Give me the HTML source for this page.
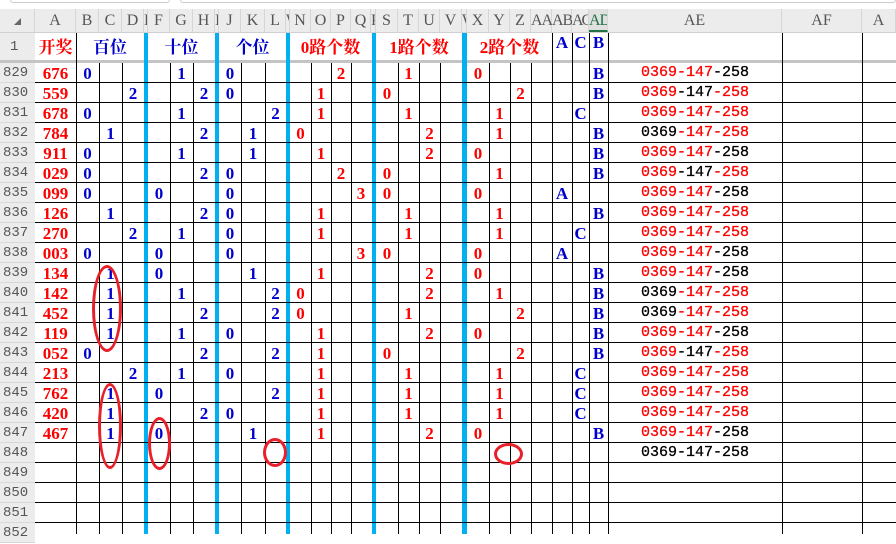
<!DOCTYPE html>
<html><head><meta charset="utf-8"><style>
*{margin:0;padding:0;box-sizing:border-box}
body{width:896px;height:534px;overflow:hidden;background:#fff;position:relative;font-family:"Liberation Serif","Noto Serif CJK SC",serif}
.a{position:absolute}
.ch{position:absolute;top:9px;height:23px;background:#ececec;color:#555;font:16px "Liberation Serif",serif;line-height:23px;text-align:center;border-right:1px solid #d6d6d6}
.vl{position:absolute;width:1px;background:#000}
.bl{position:absolute;background:#00b0f0;top:33px;height:501px}
.hl{position:absolute;left:35px;width:861px;height:1px;background:#000}
.rh{position:absolute;left:0;width:35px;height:20px;background:#ececec;color:#555;font:14px "Liberation Mono",monospace;line-height:21px;padding-left:3px;border-bottom:1px solid #d8d8d8}
.row{position:absolute;left:0;width:896px;height:20px}
.row span{position:absolute;top:1px;height:20px;line-height:20px;text-align:center;font:bold 17px "Liberation Serif",serif}
.r{color:#f00}.b{color:#0000cc}.k{color:#000}
.cA{left:35px;width:41px}.cB{left:76px;width:23px}.cC{left:99px;width:23px}.cD{left:122px;width:22px}
.cF{left:148px;width:22px}.cG{left:170px;width:23px}.cH{left:193px;width:22px}
.cJ{left:219px;width:22px}.cK{left:241px;width:24px}.cL{left:265px;width:21px}
.cN{left:290px;width:21px}.cO{left:311px;width:20px}.cP{left:331px;width:20px}.cQ{left:351px;width:20px}
.cS{left:376px;width:22px}.cT{left:398px;width:21px}.cU{left:419px;width:21px}.cV{left:440px;width:22px}
.cX{left:467px;width:22px}.cY{left:489px;width:21px}.cZ{left:510px;width:21px}
.cAB{left:552px;width:20px}.cAC{left:572px;width:17px}.cAD{left:589px;width:19px}
.row span.cAE{left:608px;width:174px;font:15px "Liberation Mono",monospace;color:#000;-webkit-text-stroke:0.3px}
.cAE i{font-style:normal;color:#f00}
.h1{position:absolute;top:33px;height:28px;line-height:28px;text-align:center;font:bold 17px "Liberation Serif","Noto Serif CJK SC",serif}
.ell{position:absolute;border:3px solid #e8202a;border-radius:50%}
</style></head><body>
<div class="a" style="left:10px;top:0;width:160px;height:3px;border:1px solid #ccc;border-top:none;border-radius:0 0 4px 4px"></div>
<div class="a" style="left:180px;top:0;width:716px;height:3px;border:1px solid #ccc;border-top:none;border-radius:0 0 4px 4px"></div>
<div class="a" style="left:0;top:9px;width:896px;height:24px;background:#ececec;border-bottom:1px solid #d0d0d0"></div>
<div class="ch" style="left:0;width:35px"><span style="display:inline-block;width:0;height:0;border-left:7px solid transparent;border-bottom:7px solid #666;margin-top:8px"></span></div>
<div class="ch" style="left:35px;width:41px">A</div><div class="ch" style="left:76px;width:23px">B</div><div class="ch" style="left:99px;width:23px">C</div><div class="ch" style="left:122px;width:22px">D</div><div class="ch" style="left:144px;width:4px;overflow:hidden">E</div>
<div class="ch" style="left:148px;width:22px">F</div><div class="ch" style="left:170px;width:23px">G</div><div class="ch" style="left:193px;width:22px">H</div><div class="ch" style="left:215px;width:4px;overflow:hidden">I</div>
<div class="ch" style="left:219px;width:22px">J</div><div class="ch" style="left:241px;width:24px">K</div><div class="ch" style="left:265px;width:21px">L</div><div class="ch" style="left:286px;width:4px;overflow:hidden">W</div>
<div class="ch" style="left:290px;width:21px">N</div><div class="ch" style="left:311px;width:20px">O</div><div class="ch" style="left:331px;width:20px">P</div><div class="ch" style="left:351px;width:20px">Q</div><div class="ch" style="left:371px;width:5px;overflow:hidden">R</div>
<div class="ch" style="left:376px;width:22px">S</div><div class="ch" style="left:398px;width:21px">T</div><div class="ch" style="left:419px;width:21px">U</div><div class="ch" style="left:440px;width:22px">V</div><div class="ch" style="left:462px;width:5px;overflow:hidden">W</div>
<div class="ch" style="left:467px;width:22px">X</div><div class="ch" style="left:489px;width:21px">Y</div><div class="ch" style="left:510px;width:21px">Z</div><div class="ch" style="left:531px;width:21px;letter-spacing:-1px">AA</div><div class="ch" style="left:552px;width:20px;letter-spacing:-1px">AB</div><div class="ch" style="left:572px;width:17px;letter-spacing:-2px;overflow:hidden">AC</div>
<div class="ch" style="left:589px;width:19px;letter-spacing:-1px;color:#217346;background:#e0e0e0;border-bottom:2px solid #217346;overflow:hidden">AD</div>
<div class="ch" style="left:608px;width:174px">AE</div><div class="ch" style="left:782px;width:80px">AF</div><div class="ch" style="left:862px;width:34px">A</div>

<div class="rh" style="top:33px;height:28px;line-height:28px;padding-left:10px;border:none">1</div>
<div class="h1 r" style="left:35px;width:41px">开奖</div>
<div class="h1 b" style="left:76px;width:68px">百位</div>
<div class="h1 b" style="left:148px;width:67px">十位</div>
<div class="h1 b" style="left:219px;width:67px">个位</div>
<div class="h1 r" style="left:290px;width:81px">0路个数</div>
<div class="h1 r" style="left:376px;width:86px">1路个数</div>
<div class="h1 r" style="left:467px;width:85px">2路个数</div>
<div class="h1 b" style="left:552px;width:20px">A</div>
<div class="h1 b" style="left:572px;width:17px">C</div>
<div class="h1 b" style="left:589px;width:19px">B</div>
<div class="a" style="left:0;top:60px;width:896px;height:3px;background:#c4c4c4"></div>

<div class="vl" style="left:76px;top:33px;height:501px"></div>
<div class="vl" style="left:99px;top:63px;height:471px"></div><div class="vl" style="left:122px;top:63px;height:471px"></div>
<div class="vl" style="left:170px;top:63px;height:471px"></div><div class="vl" style="left:193px;top:63px;height:471px"></div>
<div class="vl" style="left:241px;top:63px;height:471px"></div><div class="vl" style="left:265px;top:63px;height:471px"></div>
<div class="vl" style="left:311px;top:63px;height:471px"></div><div class="vl" style="left:331px;top:63px;height:471px"></div><div class="vl" style="left:351px;top:63px;height:471px"></div>
<div class="vl" style="left:398px;top:63px;height:471px"></div><div class="vl" style="left:419px;top:63px;height:471px"></div><div class="vl" style="left:440px;top:63px;height:471px"></div>
<div class="vl" style="left:489px;top:63px;height:471px"></div><div class="vl" style="left:510px;top:63px;height:471px"></div><div class="vl" style="left:531px;top:63px;height:471px"></div>
<div class="vl" style="left:552px;top:33px;height:501px"></div><div class="vl" style="left:572px;top:33px;height:501px"></div><div class="vl" style="left:589px;top:33px;height:501px"></div><div class="vl" style="left:608px;top:33px;height:501px"></div>
<div class="vl" style="left:782px;top:33px;height:501px"></div><div class="vl" style="left:862px;top:33px;height:501px"></div>
<div class="bl" style="left:144px;width:4px"></div><div class="bl" style="left:215px;width:4px"></div><div class="bl" style="left:286px;width:4px"></div><div class="bl" style="left:372px;width:4px"></div><div class="bl" style="left:462px;width:5px"></div>

<div class="hl" style="top:82px"></div><div class="hl" style="top:102px"></div><div class="hl" style="top:122px"></div><div class="hl" style="top:142px"></div><div class="hl" style="top:162px"></div><div class="hl" style="top:182px"></div><div class="hl" style="top:202px"></div><div class="hl" style="top:222px"></div><div class="hl" style="top:242px"></div><div class="hl" style="top:262px"></div><div class="hl" style="top:282px"></div><div class="hl" style="top:302px"></div><div class="hl" style="top:322px"></div><div class="hl" style="top:342px"></div><div class="hl" style="top:362px"></div><div class="hl" style="top:382px"></div><div class="hl" style="top:402px"></div><div class="hl" style="top:422px"></div><div class="hl" style="top:442px"></div><div class="hl" style="top:462px"></div><div class="hl" style="top:482px"></div><div class="hl" style="top:502px"></div><div class="hl" style="top:522px"></div>

<div class="rh" style="top:63px">829</div><div class="rh" style="top:83px">830</div><div class="rh" style="top:103px">831</div><div class="rh" style="top:123px">832</div><div class="rh" style="top:143px">833</div><div class="rh" style="top:163px">834</div><div class="rh" style="top:183px">835</div><div class="rh" style="top:203px">836</div><div class="rh" style="top:223px">837</div><div class="rh" style="top:243px">838</div><div class="rh" style="top:263px">839</div><div class="rh" style="top:283px">840</div><div class="rh" style="top:303px">841</div><div class="rh" style="top:323px">842</div><div class="rh" style="top:343px">843</div><div class="rh" style="top:363px">844</div><div class="rh" style="top:383px">845</div><div class="rh" style="top:403px">846</div><div class="rh" style="top:423px">847</div><div class="rh" style="top:443px">848</div><div class="rh" style="top:463px">849</div><div class="rh" style="top:483px">850</div><div class="rh" style="top:503px">851</div><div class="rh" style="top:523px">852</div>

<div class="row" style="top:63px"><span class="cA r">676</span><span class="cB b">0</span><span class="cG b">1</span><span class="cJ b">0</span><span class="cP r">2</span><span class="cT r">1</span><span class="cX r">0</span><span class="cAD b">B</span><span class="cAE"><i>0369-147</i>-258</span></div>
<div class="row" style="top:83px"><span class="cA r">559</span><span class="cD b">2</span><span class="cH b">2</span><span class="cJ b">0</span><span class="cO r">1</span><span class="cS r">0</span><span class="cZ r">2</span><span class="cAD b">B</span><span class="cAE"><i>0369</i>-147<i>-258</i></span></div>
<div class="row" style="top:103px"><span class="cA r">678</span><span class="cB b">0</span><span class="cG b">1</span><span class="cL b">2</span><span class="cO r">1</span><span class="cT r">1</span><span class="cY r">1</span><span class="cAC b">C</span><span class="cAE"><i>0369-147-258</i></span></div>
<div class="row" style="top:123px"><span class="cA r">784</span><span class="cC b">1</span><span class="cH b">2</span><span class="cK b">1</span><span class="cN r">0</span><span class="cU r">2</span><span class="cY r">1</span><span class="cAD b">B</span><span class="cAE">0369<i>-147-258</i></span></div>
<div class="row" style="top:143px"><span class="cA r">911</span><span class="cB b">0</span><span class="cG b">1</span><span class="cK b">1</span><span class="cO r">1</span><span class="cU r">2</span><span class="cX r">0</span><span class="cAD b">B</span><span class="cAE"><i>0369-147</i>-258</span></div>
<div class="row" style="top:163px"><span class="cA r">029</span><span class="cB b">0</span><span class="cH b">2</span><span class="cJ b">0</span><span class="cP r">2</span><span class="cS r">0</span><span class="cY r">1</span><span class="cAD b">B</span><span class="cAE"><i>0369</i>-147<i>-258</i></span></div>
<div class="row" style="top:183px"><span class="cA r">099</span><span class="cB b">0</span><span class="cF b">0</span><span class="cJ b">0</span><span class="cQ r">3</span><span class="cS r">0</span><span class="cX r">0</span><span class="cAB b">A</span><span class="cAE"><i>0369-147</i>-258</span></div>
<div class="row" style="top:203px"><span class="cA r">126</span><span class="cC b">1</span><span class="cH b">2</span><span class="cJ b">0</span><span class="cO r">1</span><span class="cT r">1</span><span class="cY r">1</span><span class="cAD b">B</span><span class="cAE"><i>0369-147-258</i></span></div>
<div class="row" style="top:223px"><span class="cA r">270</span><span class="cD b">2</span><span class="cG b">1</span><span class="cJ b">0</span><span class="cO r">1</span><span class="cT r">1</span><span class="cY r">1</span><span class="cAC b">C</span><span class="cAE"><i>0369-147-258</i></span></div>
<div class="row" style="top:243px"><span class="cA r">003</span><span class="cB b">0</span><span class="cF b">0</span><span class="cJ b">0</span><span class="cQ r">3</span><span class="cS r">0</span><span class="cX r">0</span><span class="cAB b">A</span><span class="cAE"><i>0369-147</i>-258</span></div>
<div class="row" style="top:263px"><span class="cA r">134</span><span class="cC b">1</span><span class="cF b">0</span><span class="cK b">1</span><span class="cO r">1</span><span class="cU r">2</span><span class="cX r">0</span><span class="cAD b">B</span><span class="cAE"><i>0369-147</i>-258</span></div>
<div class="row" style="top:283px"><span class="cA r">142</span><span class="cC b">1</span><span class="cG b">1</span><span class="cL b">2</span><span class="cN r">0</span><span class="cU r">2</span><span class="cY r">1</span><span class="cAD b">B</span><span class="cAE">0369<i>-147-258</i></span></div>
<div class="row" style="top:303px"><span class="cA r">452</span><span class="cC b">1</span><span class="cH b">2</span><span class="cL b">2</span><span class="cN r">0</span><span class="cT r">1</span><span class="cZ r">2</span><span class="cAD b">B</span><span class="cAE">0369<i>-147-258</i></span></div>
<div class="row" style="top:323px"><span class="cA r">119</span><span class="cC b">1</span><span class="cG b">1</span><span class="cJ b">0</span><span class="cO r">1</span><span class="cU r">2</span><span class="cX r">0</span><span class="cAD b">B</span><span class="cAE"><i>0369-147</i>-258</span></div>
<div class="row" style="top:343px"><span class="cA r">052</span><span class="cB b">0</span><span class="cH b">2</span><span class="cL b">2</span><span class="cO r">1</span><span class="cS r">0</span><span class="cZ r">2</span><span class="cAD b">B</span><span class="cAE"><i>0369</i>-147<i>-258</i></span></div>
<div class="row" style="top:363px"><span class="cA r">213</span><span class="cD b">2</span><span class="cG b">1</span><span class="cJ b">0</span><span class="cO r">1</span><span class="cT r">1</span><span class="cY r">1</span><span class="cAC b">C</span><span class="cAE"><i>0369-147-258</i></span></div>
<div class="row" style="top:383px"><span class="cA r">762</span><span class="cC b">1</span><span class="cF b">0</span><span class="cL b">2</span><span class="cO r">1</span><span class="cT r">1</span><span class="cY r">1</span><span class="cAC b">C</span><span class="cAE"><i>0369-147-258</i></span></div>
<div class="row" style="top:403px"><span class="cA r">420</span><span class="cC b">1</span><span class="cH b">2</span><span class="cJ b">0</span><span class="cO r">1</span><span class="cT r">1</span><span class="cY r">1</span><span class="cAC b">C</span><span class="cAE"><i>0369-147-258</i></span></div>
<div class="row" style="top:423px"><span class="cA r">467</span><span class="cC b">1</span><span class="cF b">0</span><span class="cK b">1</span><span class="cO r">1</span><span class="cU r">2</span><span class="cX r">0</span><span class="cAD b">B</span><span class="cAE"><i>0369-147</i>-258</span></div>
<div class="row" style="top:443px"><span class="cAE">0369-147-258</span></div>

<div class="ell" style="left:92px;top:265px;width:30px;height:87px"></div>
<div class="ell" style="left:98px;top:383px;width:24px;height:86px"></div>
<div class="ell" style="left:148px;top:417px;width:23px;height:53px"></div>
<div class="ell" style="left:263px;top:438px;width:24px;height:29px"></div>
<div class="ell" style="left:494px;top:443px;width:29px;height:22px"></div>
</body></html>
